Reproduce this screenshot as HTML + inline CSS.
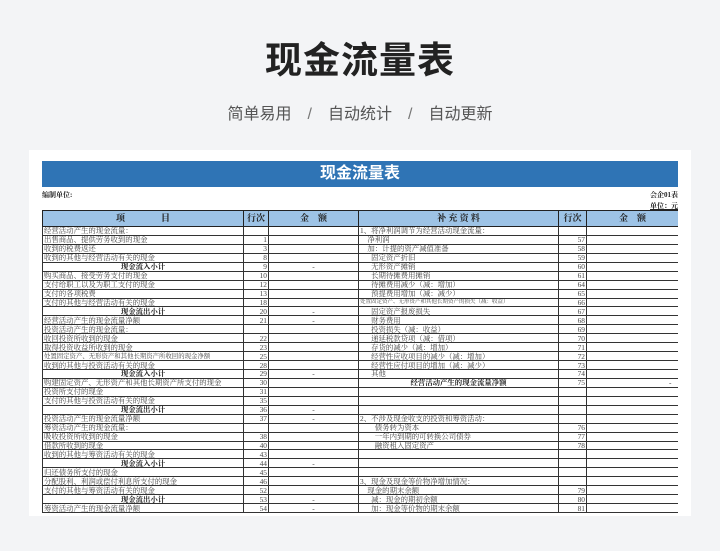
<!DOCTYPE html>
<html><head><meta charset="utf-8"><style>
*{margin:0;padding:0;box-sizing:border-box}
body{width:720px;height:551px;background:#f3f4f6;font-family:"Liberation Sans","Noto Sans CJK SC",sans-serif;position:relative;overflow:hidden}
.t{position:absolute;top:30px;left:0;width:720px;text-align:center;font-size:37px;font-weight:bold;color:#222;letter-spacing:1px}
.s{position:absolute;top:100px;left:0;width:720px;text-align:center;font-size:16px;color:#555;word-spacing:0}
.s span{margin:0 16px;color:#777}
.card{position:absolute;left:29px;top:150px;width:662px;height:366px;background:#fff;overflow:hidden}
.ban{position:absolute;left:13px;top:11px;width:636px;height:26px;background:#2f74b5;color:#fff;text-align:center;font-size:16px;font-weight:bold;line-height:26px}
.lab{position:absolute;font-size:7px;font-weight:bold;color:#222;font-family:"Liberation Serif","Noto Serif CJK SC",serif}
.tw{position:absolute;left:13px;top:60px;width:636px;height:306px;overflow:hidden}
table{border-collapse:collapse;width:636px;table-layout:fixed;font-family:"Liberation Serif","Noto Serif CJK SC",serif;font-size:7.4px;color:#444}
td{border:1px solid #333;height:8.95px;line-height:7px;padding:0 1px;white-space:nowrap;overflow:hidden}
tr.h td{background:#9dc3e6;height:16px;font-size:9px;font-weight:bold;color:#222;text-align:center;border:1.5px solid #222}
table{border:1.5px solid #222}
.n{text-align:right}.c{text-align:center}.b{font-weight:bold;text-align:center;color:#222}
</style></head><body>
<div class="t">现金流量表</div>
<div class="s">简单易用<span>/</span>自动统计<span>/</span>自动更新</div>
<div class="card">
<div class="ban">现金流量表</div>
<div class="lab" style="left:13px;top:40px">编制单位:</div>
<div class="lab" style="right:13px;top:40px">会企01表</div>
<div class="lab" style="right:13px;top:51px;text-decoration:underline">单位：元</div>
<div class="tw"><table>
<colgroup><col style="width:201px"><col style="width:25px"><col style="width:90px"><col style="width:200px"><col style="width:28px"><col style="width:92px"></colgroup>
<tr class="h"><td>项　　　　目</td><td>行次</td><td>金　额</td><td>补 充 资 料</td><td>行次</td><td>金　额</td></tr>
<tr><td>经营活动产生的现金流量：</td><td></td><td></td><td>1、将净利润调节为经营活动现金流量：</td><td></td><td></td></tr>
<tr><td>出售商品、提供劳务收到的现金</td><td class="n">1</td><td></td><td>&nbsp;&nbsp;&nbsp;&nbsp;净利润</td><td class="n">57</td><td></td></tr>
<tr><td>收到的税费返还</td><td class="n">3</td><td></td><td>&nbsp;&nbsp;&nbsp;&nbsp;加：计提的资产减值准备</td><td class="n">58</td><td></td></tr>
<tr><td>收到的其他与经营活动有关的现金</td><td class="n">8</td><td></td><td>&nbsp;&nbsp;&nbsp;&nbsp;&nbsp;&nbsp;固定资产折旧</td><td class="n">59</td><td></td></tr>
<tr><td class="b">现金流入小计</td><td class="n">9</td><td class="c">-</td><td>&nbsp;&nbsp;&nbsp;&nbsp;&nbsp;&nbsp;无形资产摊销</td><td class="n">60</td><td></td></tr>
<tr><td>购买商品、接受劳务支付的现金</td><td class="n">10</td><td></td><td>&nbsp;&nbsp;&nbsp;&nbsp;&nbsp;&nbsp;长期待摊费用摊销</td><td class="n">61</td><td></td></tr>
<tr><td>支付给职工以及为职工支付的现金</td><td class="n">12</td><td></td><td>&nbsp;&nbsp;&nbsp;&nbsp;&nbsp;&nbsp;待摊费用减少（减：增加）</td><td class="n">64</td><td></td></tr>
<tr><td>支付的各项税费</td><td class="n">13</td><td></td><td>&nbsp;&nbsp;&nbsp;&nbsp;&nbsp;&nbsp;预提费用增加（减：减少）</td><td class="n">65</td><td></td></tr>
<tr><td>支付的其他与经营活动有关的现金</td><td class="n">18</td><td></td><td style="font-size:5.5px">处置固定资产、无形资产和其他长期资产的损失（减：收益）</td><td class="n">66</td><td></td></tr>
<tr><td class="b">现金流出小计</td><td class="n">20</td><td class="c">-</td><td>&nbsp;&nbsp;&nbsp;&nbsp;&nbsp;&nbsp;固定资产报废损失</td><td class="n">67</td><td></td></tr>
<tr><td>经营活动产生的现金流量净额</td><td class="n">21</td><td class="c">-</td><td>&nbsp;&nbsp;&nbsp;&nbsp;&nbsp;&nbsp;财务费用</td><td class="n">68</td><td></td></tr>
<tr><td>投资活动产生的现金流量：</td><td></td><td></td><td>&nbsp;&nbsp;&nbsp;&nbsp;&nbsp;&nbsp;投资损失（减：收益）</td><td class="n">69</td><td></td></tr>
<tr><td>收回投资所收到的现金</td><td class="n">22</td><td></td><td>&nbsp;&nbsp;&nbsp;&nbsp;&nbsp;&nbsp;递延税款贷项（减：借项）</td><td class="n">70</td><td></td></tr>
<tr><td>取得投资收益所收到的现金</td><td class="n">23</td><td></td><td>&nbsp;&nbsp;&nbsp;&nbsp;&nbsp;&nbsp;存货的减少（减：增加）</td><td class="n">71</td><td></td></tr>
<tr><td style="font-size:6.4px">处置固定资产、无形资产和其他长期资产所收回的现金净额</td><td class="n">25</td><td></td><td>&nbsp;&nbsp;&nbsp;&nbsp;&nbsp;&nbsp;经营性应收项目的减少（减：增加）</td><td class="n">72</td><td></td></tr>
<tr><td>收到的其他与投资活动有关的现金</td><td class="n">28</td><td></td><td>&nbsp;&nbsp;&nbsp;&nbsp;&nbsp;&nbsp;经营性应付项目的增加（减：减少）</td><td class="n">73</td><td></td></tr>
<tr><td class="b">现金流入小计</td><td class="n">29</td><td class="c">-</td><td>&nbsp;&nbsp;&nbsp;&nbsp;&nbsp;&nbsp;其他</td><td class="n">74</td><td></td></tr>
<tr><td>购建固定资产、无形资产和其他长期资产所支付的现金</td><td class="n">30</td><td></td><td class="b">经营活动产生的现金流量净额</td><td class="n">75</td><td class="n">-&nbsp;&nbsp;&nbsp;</td></tr>
<tr><td>投资所支付的现金</td><td class="n">31</td><td></td><td></td><td></td><td></td></tr>
<tr><td>支付的其他与投资活动有关的现金</td><td class="n">35</td><td></td><td></td><td></td><td></td></tr>
<tr><td class="b">现金流出小计</td><td class="n">36</td><td class="c">-</td><td></td><td></td><td></td></tr>
<tr><td>投资活动产生的现金流量净额</td><td class="n">37</td><td class="c">-</td><td>2、不涉及现金收支的投资和筹资活动：</td><td></td><td></td></tr>
<tr><td>筹资活动产生的现金流量：</td><td></td><td></td><td>&nbsp;&nbsp;&nbsp;&nbsp;&nbsp;&nbsp;&nbsp;&nbsp;债务转为资本</td><td class="n">76</td><td></td></tr>
<tr><td>吸收投资所收到的现金</td><td class="n">38</td><td></td><td>&nbsp;&nbsp;&nbsp;&nbsp;&nbsp;&nbsp;&nbsp;&nbsp;一年内到期的可转换公司债券</td><td class="n">77</td><td></td></tr>
<tr><td>借款所收到的现金</td><td class="n">40</td><td></td><td>&nbsp;&nbsp;&nbsp;&nbsp;&nbsp;&nbsp;&nbsp;&nbsp;融资租入固定资产</td><td class="n">78</td><td></td></tr>
<tr><td>收到的其他与筹资活动有关的现金</td><td class="n">43</td><td></td><td></td><td></td><td></td></tr>
<tr><td class="b">现金流入小计</td><td class="n">44</td><td class="c">-</td><td></td><td></td><td></td></tr>
<tr><td>归还债务所支付的现金</td><td class="n">45</td><td></td><td></td><td></td><td></td></tr>
<tr><td>分配股利、利润或偿付利息所支付的现金</td><td class="n">46</td><td></td><td>3、现金及现金等价物净增加情况：</td><td></td><td></td></tr>
<tr><td>支付的其他与筹资活动有关的现金</td><td class="n">52</td><td></td><td>&nbsp;&nbsp;&nbsp;&nbsp;现金的期末余额</td><td class="n">79</td><td></td></tr>
<tr><td class="b">现金流出小计</td><td class="n">53</td><td class="c">-</td><td>&nbsp;&nbsp;&nbsp;&nbsp;&nbsp;&nbsp;减：现金的期初余额</td><td class="n">80</td><td></td></tr>
<tr><td>筹资活动产生的现金流量净额</td><td class="n">54</td><td class="c">-</td><td>&nbsp;&nbsp;&nbsp;&nbsp;&nbsp;&nbsp;加：现金等价物的期末余额</td><td class="n">81</td><td></td></tr>
</table></div>
</div>
</body></html>
